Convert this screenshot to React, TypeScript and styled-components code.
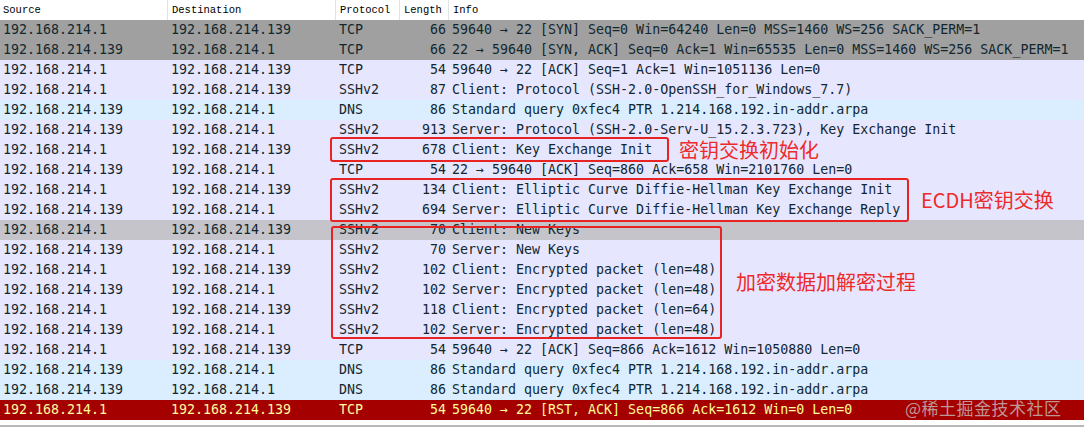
import React from "react";
import styled, { createGlobalStyle } from "styled-components";

const GlobalStyle = createGlobalStyle`
  html, body { margin: 0; padding: 0; background: #ffffff; }
  #root { width: 1084px; }
`;

type Packet = {
  src: string;
  dst: string;
  proto: string;
  len: number;
  info: string;
  kind: "syn" | "tcp" | "dns" | "mark" | "rst";
};

const A = "192.168.214.1";
const B = "192.168.214.139";

const packets: Packet[] = [
  { src: A, dst: B, proto: "TCP", len: 66, info: "59640 → 22 [SYN] Seq=0 Win=64240 Len=0 MSS=1460 WS=256 SACK_PERM=1", kind: "syn" },
  { src: B, dst: A, proto: "TCP", len: 66, info: "22 → 59640 [SYN, ACK] Seq=0 Ack=1 Win=65535 Len=0 MSS=1460 WS=256 SACK_PERM=1", kind: "syn" },
  { src: A, dst: B, proto: "TCP", len: 54, info: "59640 → 22 [ACK] Seq=1 Ack=1 Win=1051136 Len=0", kind: "tcp" },
  { src: A, dst: B, proto: "SSHv2", len: 87, info: "Client: Protocol (SSH-2.0-OpenSSH_for_Windows_7.7)", kind: "tcp" },
  { src: B, dst: A, proto: "DNS", len: 86, info: "Standard query 0xfec4 PTR 1.214.168.192.in-addr.arpa", kind: "dns" },
  { src: B, dst: A, proto: "SSHv2", len: 913, info: "Server: Protocol (SSH-2.0-Serv-U_15.2.3.723), Key Exchange Init", kind: "tcp" },
  { src: A, dst: B, proto: "SSHv2", len: 678, info: "Client: Key Exchange Init", kind: "tcp" },
  { src: B, dst: A, proto: "TCP", len: 54, info: "22 → 59640 [ACK] Seq=860 Ack=658 Win=2101760 Len=0", kind: "tcp" },
  { src: A, dst: B, proto: "SSHv2", len: 134, info: "Client: Elliptic Curve Diffie-Hellman Key Exchange Init", kind: "tcp" },
  { src: B, dst: A, proto: "SSHv2", len: 694, info: "Server: Elliptic Curve Diffie-Hellman Key Exchange Reply", kind: "tcp" },
  { src: A, dst: B, proto: "SSHv2", len: 70, info: "Client: New Keys", kind: "mark" },
  { src: B, dst: A, proto: "SSHv2", len: 70, info: "Server: New Keys", kind: "tcp" },
  { src: A, dst: B, proto: "SSHv2", len: 102, info: "Client: Encrypted packet (len=48)", kind: "tcp" },
  { src: B, dst: A, proto: "SSHv2", len: 102, info: "Server: Encrypted packet (len=48)", kind: "tcp" },
  { src: A, dst: B, proto: "SSHv2", len: 118, info: "Client: Encrypted packet (len=64)", kind: "tcp" },
  { src: B, dst: A, proto: "SSHv2", len: 102, info: "Server: Encrypted packet (len=48)", kind: "tcp" },
  { src: A, dst: B, proto: "TCP", len: 54, info: "59640 → 22 [ACK] Seq=866 Ack=1612 Win=1050880 Len=0", kind: "tcp" },
  { src: B, dst: A, proto: "DNS", len: 86, info: "Standard query 0xfec4 PTR 1.214.168.192.in-addr.arpa", kind: "dns" },
  { src: B, dst: A, proto: "DNS", len: 86, info: "Standard query 0xfec4 PTR 1.214.168.192.in-addr.arpa", kind: "dns" },
  { src: A, dst: B, proto: "TCP", len: 54, info: "59640 → 22 [RST, ACK] Seq=866 Ack=1612 Win=0 Len=0", kind: "rst" },
];

const palette: Record<Packet["kind"], { bg: string; fg: string }> = {
  syn: { bg: "#a0a0a0", fg: "#12272e" },
  tcp: { bg: "#e7e6ff", fg: "#12272e" },
  dns: { bg: "#daeeff", fg: "#12272e" },
  mark: { bg: "#c4c4ca", fg: "#12272e" },
  rst: { bg: "#a40000", fg: "#fffc9c" },
};

const COLS = "167px 168px 64px 49px 1fr";

const Page = styled.div`
  position: relative;
  width: 1084px;
  height: 427px;
  overflow: hidden;
  background: #ffffff;
`;

const HeaderRow = styled.div`
  display: grid;
  grid-template-columns: ${COLS};
  height: 20px;
  background: #ffffff;
`;

const HeaderCell = styled.div<{ $first?: boolean }>`
  font-family: "Liberation Mono", "DejaVu Sans Mono", monospace;
  font-size: 10.5px;
  line-height: 20px;
  color: #000000;
  padding-left: ${(p) => (p.$first ? "3px" : "4px")};
  border-left: ${(p) => (p.$first ? "none" : "1px solid #e3e3e3")};
  white-space: nowrap;
  overflow: hidden;
`;

const Row = styled.div<{ $bg: string; $fg: string }>`
  display: grid;
  grid-template-columns: ${COLS};
  height: 20px;
  background: ${(p) => p.$bg};
  color: ${(p) => p.$fg};
`;

const Cell = styled.div<{ $first?: boolean; $right?: boolean }>`
  font-family: "DejaVu Sans Mono", "Liberation Mono", monospace;
  font-size: 13.3px;
  line-height: 20px;
  padding-left: ${(p) => (p.$right ? "0" : p.$first ? "3px" : "4px")};
  padding-right: ${(p) => (p.$right ? "2px" : "0")};
  text-align: ${(p) => (p.$right ? "right" : "left")};
  white-space: nowrap;
  overflow: hidden;
`;

const BottomRule = styled.div`
  margin-top: 5px;
  height: 2px;
  background: #b8b8b8;
`;

const Box = styled.div<{ $top: number; $left: number; $w: number; $h: number }>`
  position: absolute;
  top: ${(p) => p.$top}px;
  left: ${(p) => p.$left}px;
  width: ${(p) => p.$w}px;
  height: ${(p) => p.$h}px;
  box-sizing: border-box;
  border: 2.5px solid #e82323;
  border-radius: 3px;
`;

const Note = styled.div<{ $top: number; $left: number }>`
  position: absolute;
  top: ${(p) => p.$top}px;
  left: ${(p) => p.$left}px;
  font-family: "Noto Sans CJK SC", "Noto Sans", sans-serif;
  font-size: 20px;
  line-height: 20px;
  color: #ee2a2a;
  white-space: nowrap;
`;

const Watermark = styled.div`
  position: absolute;
  left: 905px;
  top: 398px;
  font-family: "Noto Sans CJK SC", "Noto Sans", sans-serif;
  font-size: 17px;
  line-height: 20px;
  color: rgba(200, 200, 200, 0.75);
  white-space: nowrap;
  letter-spacing: 0.5px;
`;

export default function App() {
  return (
    <>
      <GlobalStyle />
      <Page>
        <HeaderRow>
          <HeaderCell $first>Source</HeaderCell>
          <HeaderCell>Destination</HeaderCell>
          <HeaderCell>Protocol</HeaderCell>
          <HeaderCell>Length</HeaderCell>
          <HeaderCell>Info</HeaderCell>
        </HeaderRow>
        {packets.map((p, i) => {
          const c = palette[p.kind];
          return (
            <Row key={i} $bg={c.bg} $fg={c.fg}>
              <Cell $first>{p.src}</Cell>
              <Cell>{p.dst}</Cell>
              <Cell>{p.proto}</Cell>
              <Cell $right>{p.len}</Cell>
              <Cell>{p.info}</Cell>
            </Row>
          );
        })}
        <BottomRule />

        <Box $top={137} $left={330} $w={339} $h={25} />
        <Note $top={140} $left={679}>密钥交换初始化</Note>

        <Box $top={178} $left={330} $w={579} $h={44} />
        <Note $top={190} $left={921}>ECDH密钥交换</Note>

        <Box $top={226} $left={331} $w={391} $h={113} />
        <Note $top={272} $left={736}>加密数据加解密过程</Note>

        <Watermark>@稀土掘金技术社区</Watermark>
      </Page>
    </>
  );
}
